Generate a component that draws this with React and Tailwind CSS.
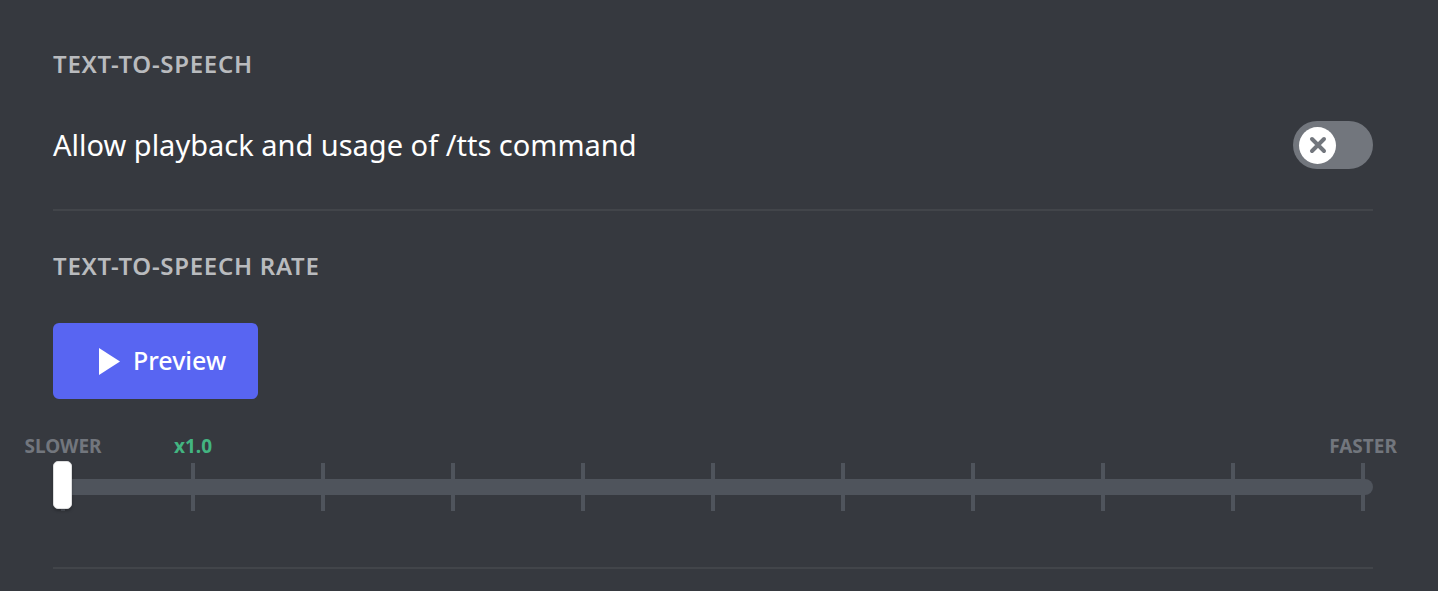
import React from "react";

const ticks = [0, 1, 2, 3, 4, 5, 6, 7, 8, 9, 10];
const labels = { 0: "SLOWER", 1: "x1.0", 10: "FASTER" };

const App = () => {
  return (
    <div
      className="w-full min-h-[591px] bg-[#36393f] pl-[53px] pr-[65px] pt-[48px]"
      style={{ fontFamily: '"Noto Sans", "Open Sans", sans-serif' }}
    >
      {/* TTS toggle */}
      <h5 className="text-[24px] leading-[32px] font-semibold text-[#b9bbbe] tracking-[0.03em]">
        TEXT-TO-SPEECH
      </h5>
      <div className="flex items-center justify-between mt-[41px]">
        <div className="text-[29px] leading-[40px] text-white">
          Allow playback and usage of /tts command
        </div>
        <div className="w-[80px] h-[48px] rounded-full bg-[#72767d] flex items-center pl-[6px]">
          <div className="w-[37px] h-[37px] rounded-full bg-white flex items-center justify-center">
            <svg width="20" height="20" viewBox="0 0 20 20">
              <path
                d="M4 4 L16 16 M16 4 L4 16"
                stroke="#72767d"
                strokeWidth="4"
                strokeLinecap="round"
              />
            </svg>
          </div>
        </div>
      </div>
      <div className="h-[2px] bg-[#42454a] mt-[40px]" />

      {/* TTS rate */}
      <h5 className="mt-[39px] text-[24px] leading-[32px] font-semibold text-[#b9bbbe] tracking-[0.03em]">
        TEXT-TO-SPEECH RATE
      </h5>
      <button className="mt-[41px] w-[205px] h-[76px] rounded-[6px] bg-[#5865f2] flex items-center pl-[46px] gap-[13px] text-white text-[25px] font-medium">
        <svg width="21" height="27" viewBox="0 0 21 27">
          <path d="M0 0 L21 13.5 L0 27 Z" fill="white" />
        </svg>
        <span>Preview</span>
      </button>

      {/* Slider */}
      <div className="w-[1320px] mt-[37px]">
        <div className="grid grid-cols-[repeat(11,130px)] -ml-[55px] text-[19px] leading-[20px] font-bold">
          {ticks.map((i) => (
            <div
              key={i}
              className={`text-center ${i === 1 ? "text-[#43b581]" : "text-[#72767d]"}`}
            >
              {labels[i] || ""}
            </div>
          ))}
        </div>
        <div className="relative h-[50px] mt-[5px]">
          <div className="absolute left-0 right-0 top-[18px] h-[16px] rounded-full bg-[#4f545c]" />
          <div className="relative flex -ml-[55px] pt-[2px]">
            {ticks.map((i) => (
              <div key={i} className="w-[130px] shrink-0 flex justify-center">
                <div className="w-[4px] h-[48px] bg-[#4f545c]" />
              </div>
            ))}
          </div>
          <div className="absolute left-0 top-0 w-[19px] h-[48px] rounded-[5px] bg-white border border-[#dcddde] shadow-[0_2px_3px_rgba(0,0,0,0.25)]" />
        </div>
      </div>
      <div className="h-[2px] bg-[#42454a] mt-[56px] w-[1320px]" />
    </div>
  );
};

export default App;
